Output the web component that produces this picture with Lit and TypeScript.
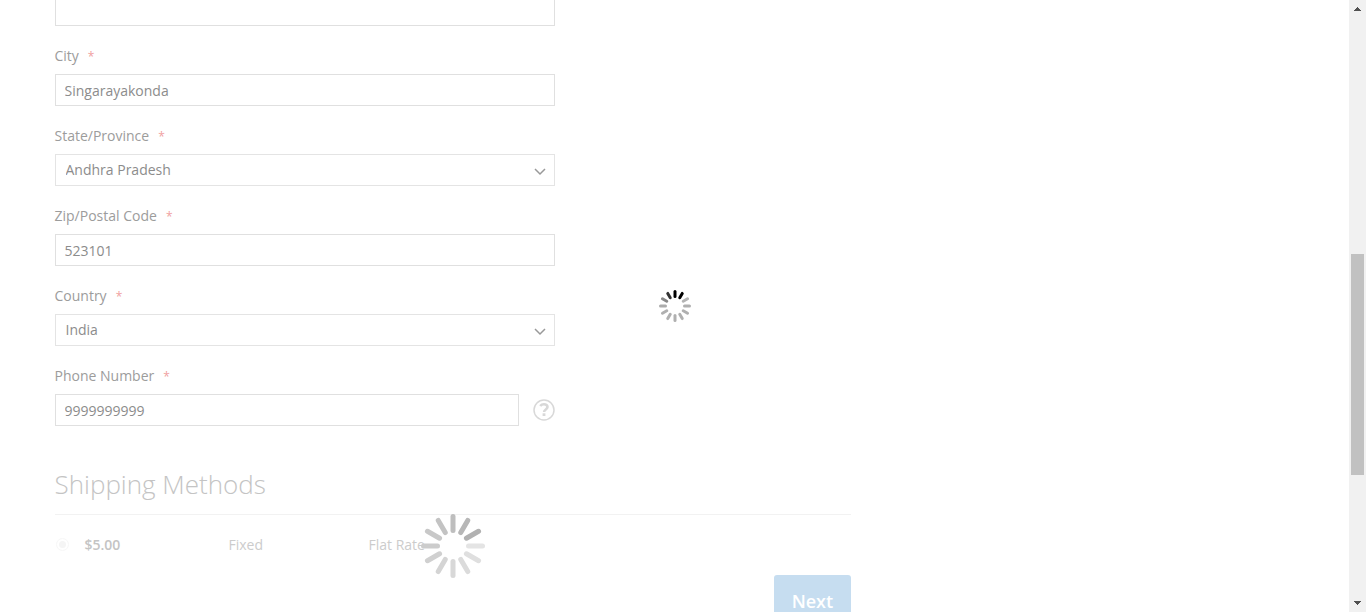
import { LitElement, html, css, svg, nothing } from "lit";
import { customElement, property } from "lit/decorators.js";
import { styleMap } from "lit/directives/style-map.js";

@customElement("loading-spinner")
class LoadingSpinner extends LitElement {
  @property({ type: Number }) size = 64;
  @property({ type: Number }) inner = 13;
  @property({ type: Number }) thickness = 5;
  @property({ type: Array }) shades: string[] = [];

  static styles = css`
    :host { display: block; }
    .spinner { display: block; }
  `;

  render() {
    const r = this.size / 2;
    const cap = this.thickness / 2;
    return html`<svg class="spinner" role="img" aria-label="Loading" width=${this.size} height=${this.size}
      viewBox="${-r} ${-r} ${this.size} ${this.size}">
      ${this.shades.map((shade, i) => svg`<line x1="0" y1=${-this.inner - cap} x2="0" y2=${-r + cap}
        stroke=${shade} stroke-width=${this.thickness} stroke-linecap="round" transform="rotate(${i * 30})" />`)}
    </svg>`;
  }
}

@customElement("page-scrollbar")
class PageScrollbar extends LitElement {
  @property({ type: Number }) start = 0;
  @property({ type: Number }) extent = 0;

  static styles = css`
    :host { display: flex; flex-direction: column; width: 17px; background: #f1f1f1; }
    .arrow { display: block; flex: none; width: 17px; height: 17px; fill: #505050; }
    .track { flex: 1; display: flex; flex-direction: column; padding: 0 2px; }
    .thumb { background: #c1c1c1; }
  `;

  render() {
    return html`
      <svg class="arrow" viewBox="0 0 17 17" shape-rendering="crispEdges"><path d="M8 7h1v1h1v1h1v1h1v1H5v-1h1V9h1V8h1z"/></svg>
      <div class="track">
        <div style=${styleMap({ height: `${this.start}%` })}></div>
        <div class="thumb" style=${styleMap({ height: `${this.extent}%` })}></div>
      </div>
      <svg class="arrow" viewBox="0 0 17 17" shape-rendering="crispEdges"><path d="M5 6h7v1h-1v1h-1v1H9v1H8V9H7V8H6V7H5z"/></svg>
    `;
  }
}

interface Field {
  id: string;
  label: string;
  value: string;
  kind: "text" | "select" | "phone";
}

const FIELDS: Field[] = [
  { id: "city", label: "City", value: "Singarayakonda", kind: "text" },
  { id: "region", label: "State/Province", value: "Andhra Pradesh", kind: "select" },
  { id: "postcode", label: "Zip/Postal Code", value: "523101", kind: "text" },
  { id: "country", label: "Country", value: "India", kind: "select" },
  { id: "telephone", label: "Phone Number", value: "9999999999", kind: "phone" },
];

const PAGE_SHADES = ["#000", "#000", "#b4b4b4", "#b0b0b0", "#b0b0b0", "#b0b0b0", "#b0b0b0", "#b0b0b0", "#b0b0b0", "#acacac", "#888", "#333"];
const METHOD_SHADES = ["#bebebe", "#b7b7b7", "#b1b1b1", "#e4e4e4", "#dfdfdf", "#dbdbdb", "#d8d8d8", "#d4d4d4", "#d0d0d0", "#ccc", "#c8c8c8", "#c3c3c3"];

@customElement("app-root")
class AppRoot extends LitElement {
  static styles = css`
    :host {
      display: flex;
      height: 100vh;
      overflow: hidden;
      background: #fff;
      font: 14px/20px "Open Sans", sans-serif;
      color: #999;
    }
    * { box-sizing: border-box; }
    .page { position: relative; flex: 1; min-width: 0; overflow: hidden; }
    .container { max-width: 1280px; margin: 0 auto; padding: 0 20px; }
    .checkout { width: 66.6667%; padding-right: 30px; }
    .address { display: flex; flex-direction: column; gap: 20px; max-width: 500px; }
    .field { display: flex; flex-direction: column; gap: 8px; }
    .label { display: flex; align-items: baseline; gap: 9px; height: 20px; color: #9c9c9c; }
    .required { font-size: 12px; color: #f0a0a0; }
    .control { position: relative; display: flex; align-items: center; gap: 14px; }
    .input {
      display: block;
      flex: 1;
      min-width: 0;
      width: 100%;
      height: 32px;
      margin: 0;
      padding: 1px 9px 0;
      border: 1px solid #e0e0e0;
      border-radius: 0;
      background: #fff;
      font: 14px/20px "Open Sans", sans-serif;
      color: #8c8c8c;
      outline: none;
      appearance: none;
    }
    .input.select { padding: 0 26px 1px 10px; border-color: #e4e4e4; }
    .input.street { flex: none; height: 26px; border-top: 0; }
    .chevron { position: absolute; right: 9px; top: 14px; pointer-events: none; }
    .help { flex: none; width: 22px; height: 22px; padding: 0; border: 0; background: none; }
    .icon { display: block; }
    .shipping { position: relative; padding-top: 40px; }
    .title {
      margin: 0;
      padding-bottom: 12px;
      border-bottom: 1px solid #f2f2f2;
      font-size: 26px;
      line-height: 36px;
      font-weight: 300;
      color: #c4c4c4;
    }
    .methods { width: 100%; border-collapse: collapse; table-layout: fixed; color: #ccc; }
    .methods td { height: 60px; padding: 0; }
    .methods .pick { width: 30px; }
    .methods .amount { width: 144px; font-weight: 600; color: #c4c4c4; }
    .methods .method { width: 140px; }
    .radio {
      display: block;
      width: 13px;
      height: 13px;
      margin: 0 1px 2px;
      appearance: none;
      border: 1px solid #f7f7f7;
      border-radius: 50%;
      padding: 2px;
      background: #f7f7f7 content-box;
    }
    .radio::before { content: ""; display: block; height: 7px; border-radius: 50%; background: #f5f5f5; }
    .radio { background: #fff; }
    .actions { display: flex; justify-content: flex-end; }
    .next {
      height: 52px;
      padding: 0 18px;
      border: 0;
      border-radius: 3px;
      background: #c6ddf0;
      color: #fff;
      font: 600 18px/20px "Open Sans", sans-serif;
    }
    .methods-loader { position: absolute; left: 50%; top: 88px; transform: translateX(-50%); }
    .page-loader { position: absolute; left: 50%; top: 50%; transform: translate(-50%, -50%); }
  `;

  private renderField(f: Field) {
    return html`<div class="field">
      <label class="label" for=${f.id}>${f.label}<span class="required">*</span></label>
      <div class="control">
        ${f.kind === "select"
          ? html`<select class="input select" id=${f.id}><option selected>${f.value}</option></select>
              <svg class="chevron" width="12" height="8" viewBox="0 0 12 8"><path d="M1 1l5 5 5-5" fill="none" stroke="#999" stroke-width="1.500"/></svg>`
          : html`<input class="input" id=${f.id} type=${f.kind === "phone" ? "tel" : "text"} .value=${f.value} />`}
        ${f.kind === "phone"
          ? html`<button class="help" type="button" aria-label="Phone number help">
              <svg class="icon" width="22" height="22" viewBox="0 0 22 22" fill="none" stroke="#d8d8d8">
                <circle cx="11" cy="11" r="10" stroke-width="1.500"/>
                <path d="M7.200 7C8.200 5.700 9.500 5.200 11 5.200c2.100 0 3.500 1.100 3.500 2.900 0 2.400-3.400 2.500-3.400 4.800" stroke-width="2.600"/>
                <path d="M11 14.300v2.700" stroke-width="2.800"/>
              </svg>
            </button>`
          : nothing}
      </div>
    </div>`;
  }

  render() {
    return html`
      <main class="page">
        <div class="container">
          <div class="checkout">
            <form class="address">
              <input class="input street" type="text" aria-label="Street Address" />
              ${FIELDS.map((f) => this.renderField(f))}
            </form>
            <section class="shipping">
              <h2 class="title">Shipping Methods</h2>
              <table class="methods">
                <tbody>
                  <tr>
                    <td class="pick"><input class="radio" type="radio" name="method" aria-label="Fixed, Flat Rate" checked /></td>
                    <td class="amount">$5.00</td>
                    <td class="method">Fixed</td>
                    <td>Flat Rate</td>
                  </tr>
                </tbody>
              </table>
              <div class="actions"><button class="next" type="button">Next</button></div>
              <loading-spinner class="methods-loader" .shades=${METHOD_SHADES}></loading-spinner>
            </section>
          </div>
        </div>
        <loading-spinner class="page-loader" .size=${32} .inner=${8} .thickness=${3} .shades=${PAGE_SHADES}></loading-spinner>
      </main>
      <page-scrollbar .start=${41} .extent=${38.2}></page-scrollbar>
    `;
  }
}
